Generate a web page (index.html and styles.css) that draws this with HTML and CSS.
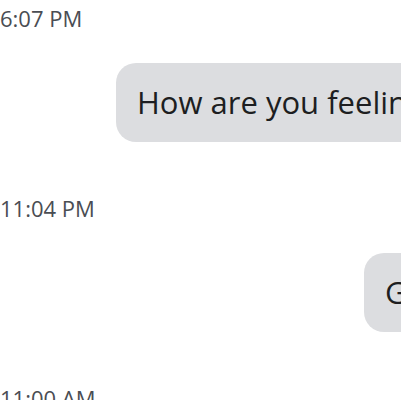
FILE: index.html
```html
<!DOCTYPE html>
<html lang="en">
<head>
    <meta charset="UTF-8">
    <meta name="viewport" content="width=device-width, initial-scale=1.0">
    <title>Messages</title>
    <link rel="stylesheet" href="styles.css">
</head>
<body>
    <div class="thread">
        <div class="stamp">6:07 PM</div>
        <div class="row">
            <div class="bubble first">How are you feeling today?</div>
        </div>

        <div class="stamp">11:04 PM</div>
        <div class="row">
            <div class="bubble second">Good night</div>
        </div>

        <div class="stamp">11:00 AM</div>
    </div>
</body>
</html>
```

FILE: styles.css
```css
html, body {
    margin: 0;
    padding: 0;
    background: #fff;
    overflow: hidden;
}
.thread {
    width: 401px;
    height: 400px;
    overflow: hidden;
    display: flex;
    flex-direction: column;
    font-family: "Open Sans", "Liberation Sans", sans-serif;
}
.stamp {
    flex: none;
    height: 36px;
    font-size: 22px;
    line-height: 36px;
    color: #4a4d53;
    white-space: nowrap;
}
.row {
    flex: none;
    display: flex;
    margin-top: 27px;
    margin-bottom: 48px;
}
.bubble {
    flex: none;
    height: 79px;
    box-sizing: border-box;
    padding: 0 21px;
    border-radius: 20px;
    background: #dcdde0;
    color: #1d1e21;
    font-size: 31px;
    line-height: 79px;
    white-space: nowrap;
}
.first {
    margin-left: 116px;
}
.second {
    margin-left: 364px;
}
```
